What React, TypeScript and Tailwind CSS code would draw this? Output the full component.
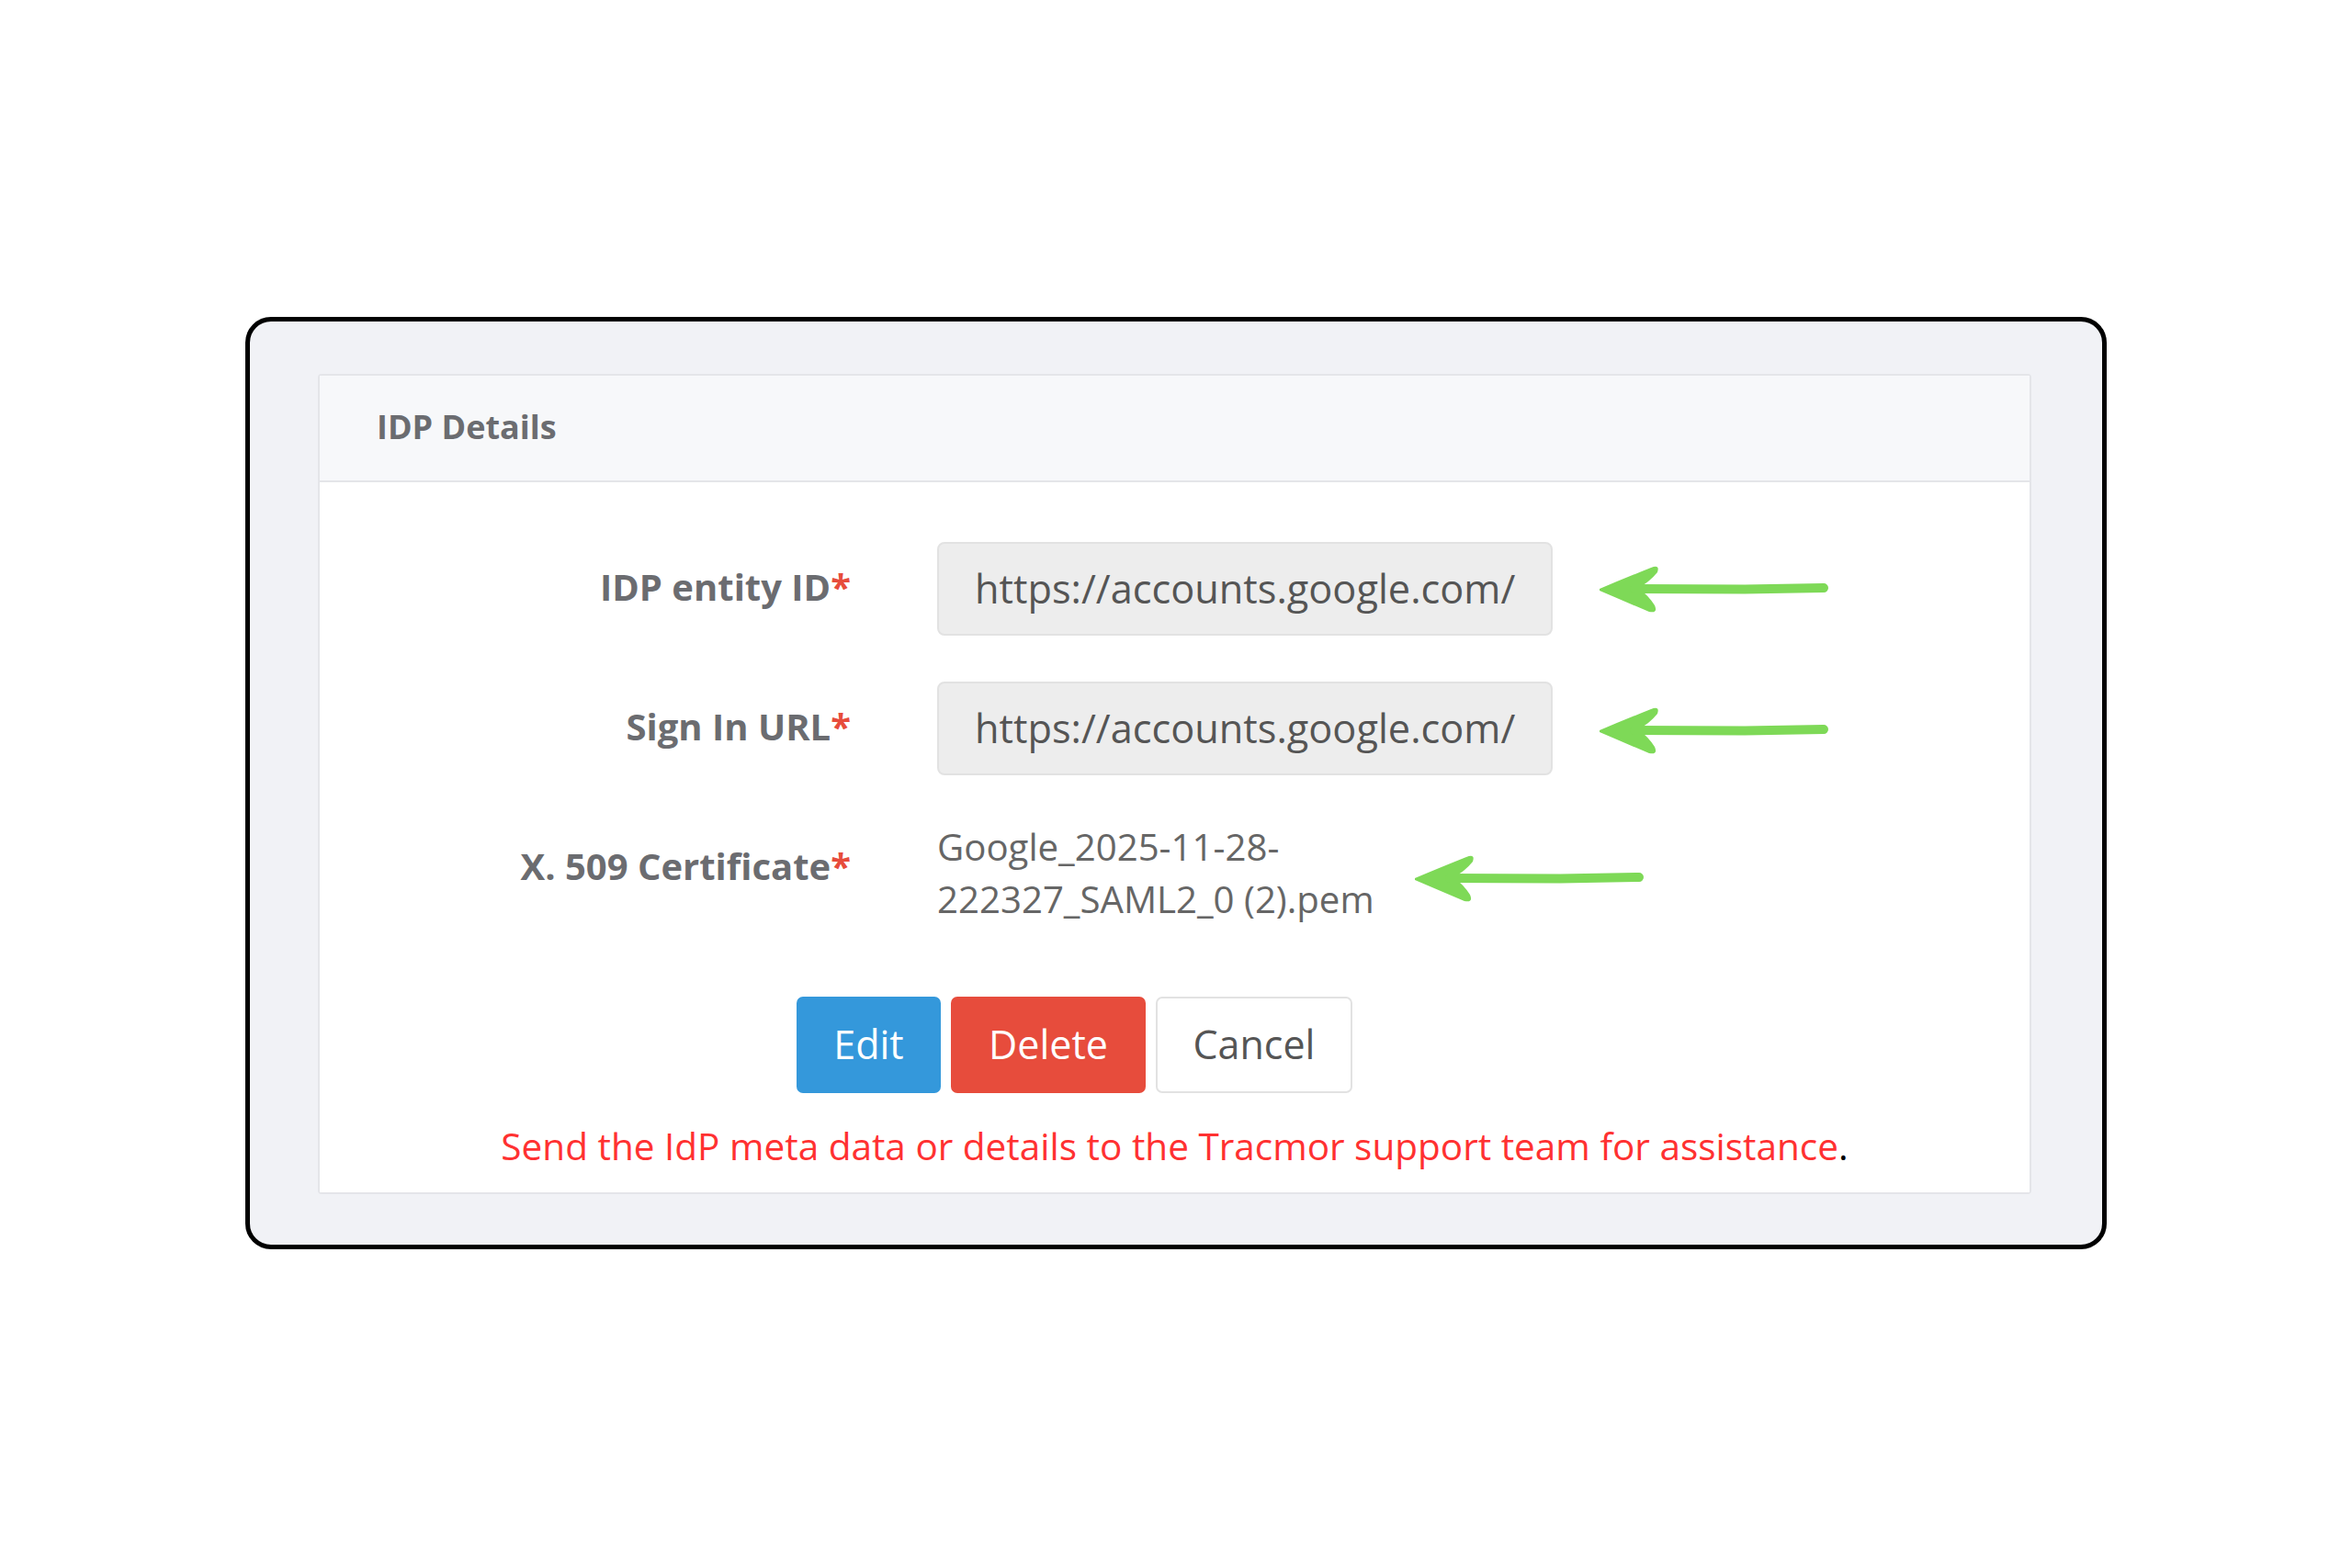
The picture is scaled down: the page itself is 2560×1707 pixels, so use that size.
import React from 'react';

const Arrow: React.FC = () => (
  <svg width="252" height="54" viewBox="0 0 252 54" className="shrink-0">
    <path
      d="M2 26 Q28 15 58 3 Q68 -1 65 8 Q56 19 44 25 Q55 33 62 44 Q66 53 56 51 Q30 40 2 28 Z"
      fill="#7ed957"
    />
    <path d="M40 26 L160 26.5 L246 25" stroke="#7ed957" strokeWidth="10" strokeLinecap="round" fill="none" />
  </svg>
);

const Label: React.FC<{ text: string; className?: string }> = ({ text, className }) => (
  <div className={`w-[578px] shrink-0 text-right text-[40px] font-bold text-[#6b6c70] leading-[57px] ${className ?? ''}`}>
    {text}
    <span className="text-[#e74c3c]">*</span>
  </div>
);

const ReadonlyInput: React.FC<{ value: string }> = ({ value }) => (
  <div className="w-[670px] h-[102px] shrink-0 flex items-center pl-[39px] bg-[#ededed] border-2 border-[#e2e2e2] rounded-[8px] text-[43.3px] text-[#555555]">
    {value}
  </div>
);

export default function App() {
  return (
    <div className="w-full h-[1707px] bg-white pt-[345px] pl-[267px] font-['Open_Sans',sans-serif]">
      <div className="w-[2026px] h-[1015px] border-[5px] border-black rounded-[28px] bg-[#f1f2f6] pt-[57px] pl-[74px]">
        <div className="w-[1865px] border-2 border-[#e4e5e9] rounded-[4px]">
          <div className="h-[116px] bg-[#f7f8fa] border-b-2 border-[#e4e5e9] flex items-center pl-[62px]">
            <h2 className="text-[36px] font-bold text-[#6b6c70] -mt-[2px]">IDP Details</h2>
          </div>

          <div className="bg-white pt-[65px] pb-[22px] flex flex-col">
            <div className="flex items-center">
              <Label text="IDP entity ID" className="-mt-[6px]" />
              <div className="ml-[94px]">
                <ReadonlyInput value="https://accounts.google.com/" />
              </div>
              <div className="ml-[49px] mt-[2px]">
                <Arrow />
              </div>
            </div>

            <div className="flex items-center mt-[50px]">
              <Label text="Sign In URL" className="-mt-[6px]" />
              <div className="ml-[94px]">
                <ReadonlyInput value="https://accounts.google.com/" />
              </div>
              <div className="ml-[49px] mt-[6px]">
                <Arrow />
              </div>
            </div>

            <div className="flex items-start mt-[49px]">
              <Label text="X. 509 Certificate" className="mt-[21px]" />
              <p className="ml-[94px] text-[40.2px] leading-[57px] text-[#666666]">
                Google_2025-11-28-
                <br />
                222327_SAML2_0 (2).pem
              </p>
              <div className="ml-[42px] mt-[37px]">
                <Arrow />
              </div>
            </div>

            <div className="flex mt-[78px] pl-[519px] gap-[11px]">
              <button className="w-[157px] h-[105px] rounded-[7px] bg-[#3498db] text-white text-[43px]">Edit</button>
              <button className="w-[212px] h-[105px] rounded-[7px] bg-[#e74c3c] text-white text-[43px]">Delete</button>
              <button className="w-[214px] h-[105px] rounded-[7px] bg-white border-2 border-[#e2e2e2] text-[#555555] text-[43px]">
                Cancel
              </button>
            </div>

            <p className="mt-[30px] text-center text-[40.5px] leading-[56px] text-[#ff3131]">
              Send the IdP meta data or details to the Tracmor support team for assistance
              <span className="text-black">.</span>
            </p>
          </div>
        </div>
      </div>
    </div>
  );
}
